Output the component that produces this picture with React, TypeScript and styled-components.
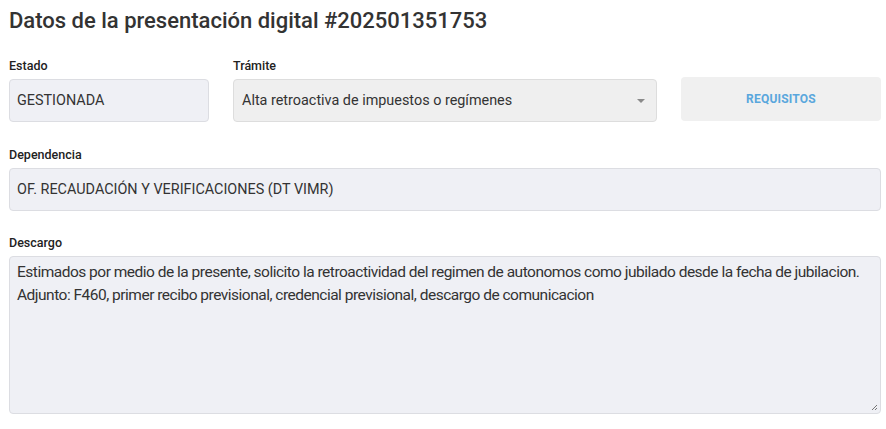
import styled, { createGlobalStyle } from "styled-components";

const GlobalStyle = createGlobalStyle`
  body {
    margin: 0;
    background: #ffffff;
    font-family: Roboto, "Liberation Sans", sans-serif;
    color: #333333;
  }
`;

const App = () => {
  return (
    <Page>
      <GlobalStyle />
      <Title>Datos de la presentación digital #202501351753</Title>
      <TopRow>
        <Field>
          <Label>Estado</Label>
          <Input>GESTIONADA</Input>
        </Field>
        <Field>
          <Label>Trámite</Label>
          <Select>
            <span>Alta retroactiva de impuestos o regímenes</span>
            <Caret />
          </Select>
        </Field>
        <ButtonCell>
          <Button>REQUISITOS</Button>
        </ButtonCell>
      </TopRow>
      <Field $space={23}>
        <Label>Dependencia</Label>
        <Input>OF. RECAUDACIÓN Y VERIFICACIONES (DT VIMR)</Input>
      </Field>
      <Field $space={22}>
        <Label>Descargo</Label>
        <TextArea>
          <p>
            Estimados por medio de la presente, solicito la retroactividad del
            regimen de autonomos como jubilado desde la fecha de jubilacion.
          </p>
          <p>
            Adjunto: F460, primer recibo previsional, credencial previsional,
            descargo de comunicacion
          </p>
          <Grip viewBox="0 0 8 8">
            <path d="M7 2 L2 7 M7 5 L5 7" stroke="#777" strokeWidth="1" />
          </Grip>
        </TextArea>
      </Field>
    </Page>
  );
};

export default App;

const Page = styled.div`
  width: 886px;
  height: 429px;
  box-sizing: border-box;
  padding: 7px 5px 0 9px;
  display: flex;
  flex-direction: column;
  overflow: hidden;
`;

const Title = styled.h1`
  margin: 0;
  font-size: 22px;
  font-weight: 500;
  line-height: 28px;
  color: #333333;
`;

const TopRow = styled.div`
  margin-top: 21px;
  display: grid;
  grid-template-columns: 200px 424px 200px;
  column-gap: 24px;
  align-items: end;
`;

const Field = styled.div<{ $space?: number }>`
  margin-top: ${({ $space }) => ($space ? `${$space}px` : "0")};
  display: flex;
  flex-direction: column;
  gap: 6px;
`;

const Label = styled.label`
  font-size: 12.5px;
  font-weight: 500;
  color: #222222;
  line-height: 14px;
  margin-top: 3px;
`;

const Input = styled.div`
  box-sizing: border-box;
  height: 43px;
  padding: 0 7px;
  display: flex;
  align-items: center;
  background: #eff0f5;
  border: 1px solid #dcdde2;
  border-radius: 4px;
  font-size: 14.4px;
  color: #333333;
`;

const Select = styled(Input)`
  justify-content: space-between;
  background: #efefef;
  border-color: #dddddd;
  padding: 0 11px 0 8px;
`;

const Caret = styled.span`
  width: 0;
  height: 0;
  border-left: 4px solid transparent;
  border-right: 4px solid transparent;
  border-top: 4px solid #8a8a8a;
`;

const ButtonCell = styled.div`
  display: flex;
  padding-bottom: 1px;
`;

const Button = styled.button`
  width: 200px;
  height: 44px;
  border: none;
  border-radius: 4px;
  background: #f0f0f0;
  color: #5aa7dd;
  font-family: Roboto, "Liberation Sans", sans-serif;
  font-size: 12px;
  font-weight: 700;
  letter-spacing: 0.2px;
  cursor: pointer;
`;

const TextArea = styled.div`
  position: relative;
  box-sizing: border-box;
  height: 158px;
  padding: 4px 7px;
  background: #eff0f5;
  border: 1px solid #dcdde2;
  border-radius: 4px;
  font-size: 15.5px;
  line-height: 23px;
  letter-spacing: -0.5px;
  color: #333333;

  p {
    margin: 0;
  }
`;

const Grip = styled.svg`
  position: absolute;
  right: 2px;
  bottom: 2px;
  width: 8px;
  height: 8px;
`;
